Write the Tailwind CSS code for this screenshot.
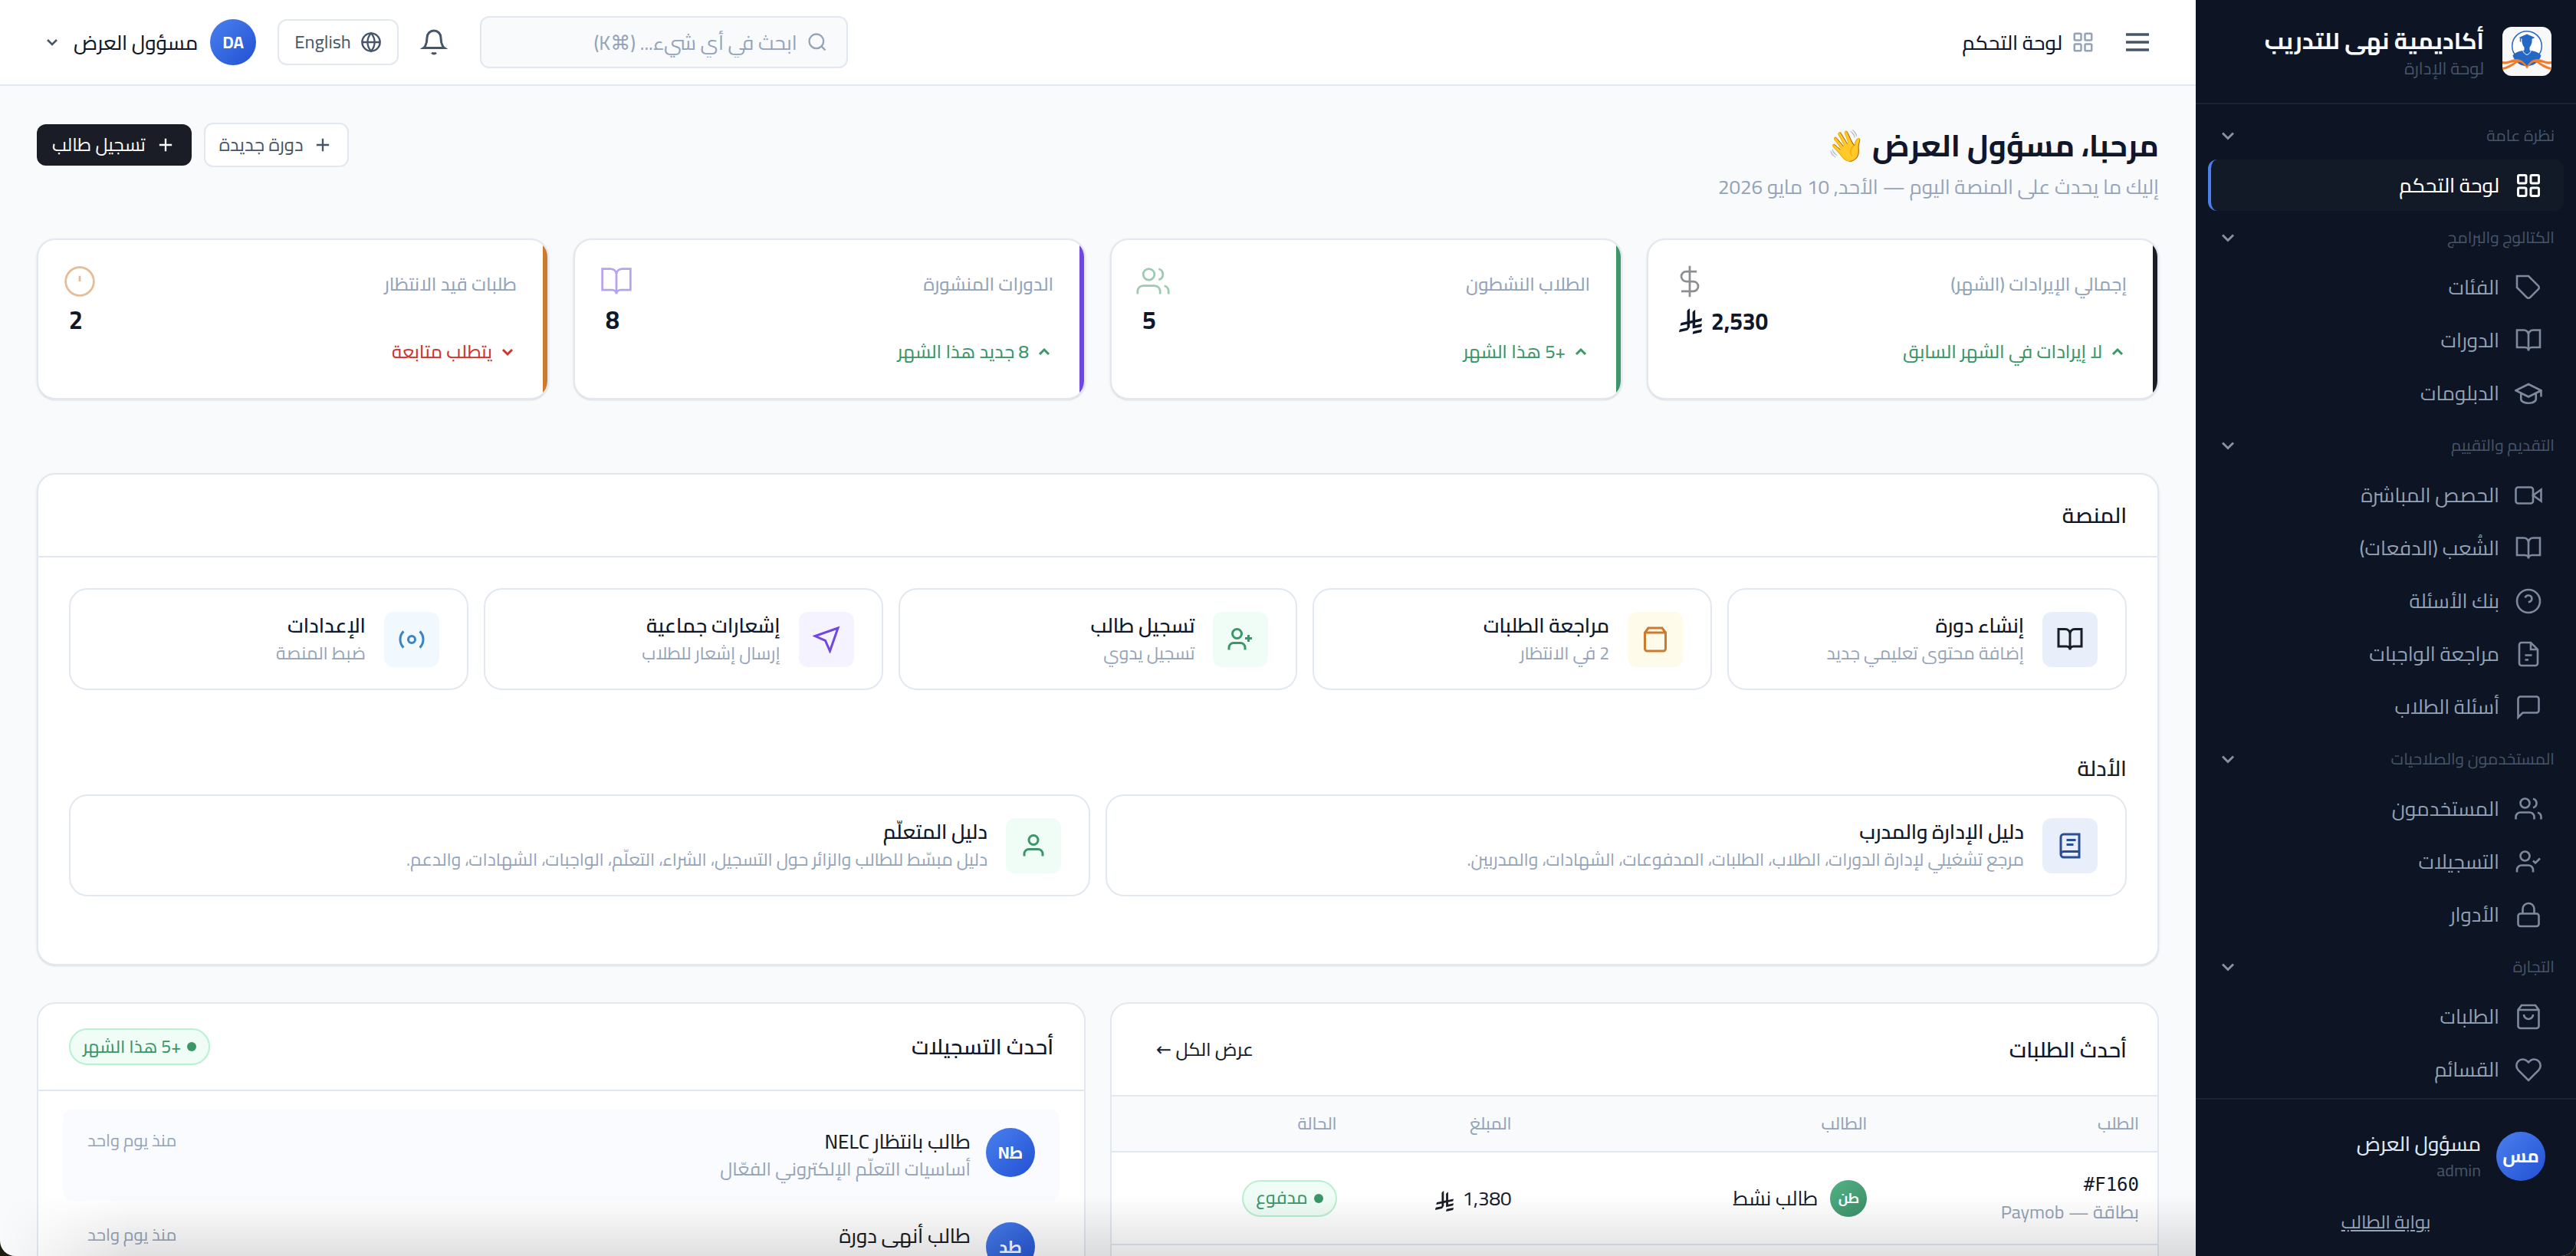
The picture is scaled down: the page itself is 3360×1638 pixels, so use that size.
<!DOCTYPE html>
<html lang="ar" dir="rtl">

<head>
    <meta charset="UTF-8">
    <meta name="viewport" content="width=device-width, initial-scale=1.0">
    <title>لوحة التحكم</title>
    <script src="https://cdn.jsdelivr.net/npm/@tailwindcss/browser@4"></script>
</head>

<body class="bg-[#1c1d10] font-['Cairo','Noto_Sans','DejaVu_Sans',sans-serif] text-[#0f172a]">
    <!-- Icons -->
    <svg class="hidden">
        <symbol id="i-grid" viewBox="0 0 24 24"><rect x="3" y="3" width="7" height="7" rx="1" /><rect x="14" y="3" width="7" height="7" rx="1" /><rect x="3" y="14" width="7" height="7" rx="1" /><rect x="14" y="14" width="7" height="7" rx="1" /></symbol>
        <symbol id="i-down" viewBox="0 0 24 24"><path d="m6 9 6 6 6-6" /></symbol>
        <symbol id="i-up" viewBox="0 0 24 24"><path d="m6 15 6-6 6 6" /></symbol>
        <symbol id="i-tag" viewBox="0 0 24 24"><path d="M20.59 13.41l-7.17 7.17a2 2 0 0 1-2.83 0L2 12V2h10l8.59 8.59a2 2 0 0 1 0 2.82z" /></symbol>
        <symbol id="i-book" viewBox="0 0 24 24"><path d="M2 3h6a4 4 0 0 1 4 4v14a3 3 0 0 0-3-3H2zM22 3h-6a4 4 0 0 0-4 4v14a3 3 0 0 1 3-3h7z" /></symbol>
        <symbol id="i-cap" viewBox="0 0 24 24"><path d="M12 4 1 9.500l11 5.500 11-5.500zM5.500 12v5c0 2 3 3.500 6.500 3.500s6.500-1.500 6.500-3.500v-5M23 9.500V15" /></symbol>
        <symbol id="i-video" viewBox="0 0 24 24"><path d="m23 7-7 5 7 5z" /><rect x="1" y="5" width="15" height="14" rx="2" /></symbol>
        <symbol id="i-help" viewBox="0 0 24 24"><circle cx="12" cy="12" r="10" /><path d="M9.090 9a3 3 0 0 1 5.830 1c0 2-3 3-3 3" /></symbol>
        <symbol id="i-file" viewBox="0 0 24 24"><path d="M14 2H6a2 2 0 0 0-2 2v16a2 2 0 0 0 2 2h12a2 2 0 0 0 2-2V8zM14 2v6h6M15 13H9M12 17H9" /></symbol>
        <symbol id="i-chat" viewBox="0 0 24 24"><path d="M21 15a2 2 0 0 1-2 2H7l-4 4V5a2 2 0 0 1 2-2h14a2 2 0 0 1 2 2z" /></symbol>
        <symbol id="i-users" viewBox="0 0 24 24"><path d="M17 21v-2a4 4 0 0 0-4-4H5a4 4 0 0 0-4 4v2" /><circle cx="9" cy="7" r="4" /><path d="M23 21v-2a4 4 0 0 0-3-3.870M16 3.130a4 4 0 0 1 0 7.750" /></symbol>
        <symbol id="i-user-check" viewBox="0 0 24 24"><path d="M16 21v-2a4 4 0 0 0-4-4H6a4 4 0 0 0-4 4v2" /><circle cx="9" cy="7" r="4" /><path d="m16 11 2 2 4-4" /></symbol>
        <symbol id="i-user-plus" viewBox="0 0 24 24"><path d="M16 21v-2a4 4 0 0 0-4-4H6a4 4 0 0 0-4 4v2" /><circle cx="9" cy="7" r="4" /><path d="M19 8v6M22 11h-6" /></symbol>
        <symbol id="i-user" viewBox="0 0 24 24"><path d="M20 21v-2a4 4 0 0 0-4-4H8a4 4 0 0 0-4 4v2" /><circle cx="12" cy="7" r="4" /></symbol>
        <symbol id="i-lock" viewBox="0 0 24 24"><rect x="3" y="11" width="18" height="11" rx="2" /><path d="M7 11V7a5 5 0 0 1 10 0v4" /></symbol>
        <symbol id="i-bag" viewBox="0 0 24 24"><path d="M6 2 3 6v14a2 2 0 0 0 2 2h14a2 2 0 0 0 2-2V6l-3-4zM3 6h18" /></symbol>
        <symbol id="i-heart" viewBox="0 0 24 24"><path d="M20.840 4.610a5.500 5.500 0 0 0-7.780 0L12 5.670l-1.060-1.060a5.500 5.500 0 0 0-7.780 7.780L12 21.230l8.840-8.840a5.500 5.500 0 0 0 0-7.780z" /></symbol>
        <symbol id="i-menu" viewBox="0 0 24 24"><path d="M3 6h18M3 12h18M3 18h18" /></symbol>
        <symbol id="i-search" viewBox="0 0 24 24"><circle cx="11" cy="11" r="8" /><path d="m21 21-4.350-4.350" /></symbol>
        <symbol id="i-bell" viewBox="0 0 24 24"><path d="M18 8A6 6 0 0 0 6 8c0 7-3 9-3 9h18s-3-2-3-9M13.730 21a2 2 0 0 1-3.460 0" /></symbol>
        <symbol id="i-globe" viewBox="0 0 24 24"><circle cx="12" cy="12" r="10" /><path d="M2 12h20M12 2a15.300 15.300 0 0 1 4 10 15.300 15.300 0 0 1-4 10 15.300 15.300 0 0 1-4-10A15.300 15.300 0 0 1 12 2z" /></symbol>
        <symbol id="i-plus" viewBox="0 0 24 24"><path d="M12 5v14M5 12h14" /></symbol>
        <symbol id="i-dollar" viewBox="0 0 24 24"><path d="M12 1v22M17 5H9.500a3.500 3.500 0 0 0 0 7h5a3.500 3.500 0 0 1 0 7H6" /></symbol>
        <symbol id="i-alert" viewBox="0 0 24 24"><circle cx="12" cy="12" r="10" /><path d="M12 8v4" /></symbol>
        <symbol id="i-send" viewBox="0 0 24 24"><path d="M22 2 15 22l-4-9-9-4z" /></symbol>
        <symbol id="i-signal" viewBox="0 0 24 24"><circle cx="12" cy="12" r="3" /><path d="M19.070 4.930a10 10 0 0 1 0 14.140M4.930 19.070a10 10 0 0 1 0-14.140" /></symbol>
        <symbol id="i-guide" viewBox="0 0 24 24"><path d="M4 19.500A2.500 2.500 0 0 1 6.500 17H20M6.500 2H20v20H6.500A2.500 2.500 0 0 1 4 19.500v-15A2.500 2.500 0 0 1 6.500 2zM9 7h8M9 11h6" /></symbol>
        <symbol id="i-riyal" viewBox="0 0 1124 1256"><path d="M699.620 1113.020c-20.060 44.480-33.320 92.750-38.400 143.370l424.510-90.240c20.060-44.470 33.310-92.750 38.400-143.370zM1085.730 895.800c20.060-44.470 33.320-92.750 38.400-143.370l-330.680 70.330v-135.200l292.270-62.110c20.060-44.470 33.320-92.750 38.400-143.370l-330.680 70.270V66.130c-50.670 28.450-95.670 66.320-132.250 110.990v403.350l-132.250 28.110V0c-50.670 28.440-95.670 66.320-132.250 110.990v525.690l-295.910 62.880c-20.060 44.470-33.330 92.750-38.420 143.370l334.330-71.050v170.260l-358.300 76.140c-20.060 44.470-33.320 92.750-38.400 143.370l375.040-79.700c30.530-6.350 56.770-24.400 73.830-49.240l68.780-101.990c7.140-10.550 11.300-23.270 11.300-36.970v-149.980l132.250-28.110v270.400z" /></symbol>
    </svg>

    <div class="flex h-screen overflow-hidden rounded-b-[20px] bg-[#f8fafc]">

        <!-- Sidebar -->
        <aside class="flex w-[496px] shrink-0 flex-col bg-[#0d1424]">
            <div class="flex h-[136px] shrink-0 items-center gap-6 border-b-2 border-[#1c2433] px-8">
                <svg class="size-16 shrink-0 rounded-xl bg-[#f8f8f8]" viewBox="0 0 64 64">
                    <circle cx="32" cy="25" r="19.300" fill="#fff" stroke="#2468c4" stroke-width="1.500" />
                    <path d="M32 9.500 21.500 14l4 1.800c-.5 4 .5 8 3 11v3.700l-6.500 1.500c-4 1-7 3-8.500 5.500A19.300 19.300 0 0 0 50.500 37.500c-1.500-2.500-4.500-4.500-8.500-5.500l-6.500-1.500v-3.700c2.500-3 3.500-7 3-11l4-1.800z" fill="#2468c4" />
                    <path d="M23.500 15v4.500" fill="none" stroke="#2468c4" stroke-width="1.500" />
                    <path d="M26.500 30.500c1 3.500 3 5 5.500 6 2.500-1 4.500-2.500 5.500-6" fill="none" stroke="#fff" stroke-width="1" />
                    <path d="M0 45c7 1.500 10-2 17-3 8-.8 12 5 15 9 3-4 7-9.800 15-9 7 1 10 4.500 17 3v3c-7 1.500-10-1.500-16-2 6 3 10 6 16 7v3c-8-1-13-5-19-9-5-3-9 2-13 7.500-4-5.500-8-10.500-13-7.500-6 4-11 8-19 9v-3c6-1 10-4 16-7-6 .5-9 3.500-16 2z" fill="#f07c2b" />
                </svg>
                <div class="min-w-0 pt-1">
                    <div class="text-[30px] leading-10 font-bold text-[#f8fafc]">أكاديمية نهى للتدريب</div>
                    <div class="text-[22px] leading-8 text-[#475569]">لوحة الإدارة</div>
                </div>
            </div>

            <nav class="flex min-h-0 flex-1 flex-col gap-0.5 overflow-hidden px-4 pt-3 text-[26px] text-[#94a3b8]">
                <button class="flex h-[58px] shrink-0 items-center justify-between px-3 text-[21px] text-[#475569]">نظرة عامة<svg class="size-7 fill-none stroke-[#8b929e] stroke-[2.5]"><use href="#i-down" /></svg></button>
                <a href="#" class="flex h-[67px] shrink-0 items-center gap-5 rounded-xl border-e-4 border-[#4a80ee] bg-[#121927] px-7 font-medium text-white"><svg class="size-9 fill-none stroke-current stroke-2"><use href="#i-grid" /></svg>لوحة التحكم</a>

                <button class="mt-1 flex h-[58px] shrink-0 items-center justify-between px-3 text-[21px] text-[#475569]">الكتالوج والبرامج<svg class="size-7 fill-none stroke-[#8b929e] stroke-[2.5]"><use href="#i-down" /></svg></button>
                <a href="#" class="flex h-[67px] shrink-0 items-center gap-5 px-7"><svg class="size-9 fill-none stroke-[#7e899d] stroke-[1.75]"><use href="#i-tag" /></svg>الفئات</a>
                <a href="#" class="flex h-[67px] shrink-0 items-center gap-5 px-7"><svg class="size-9 fill-none stroke-[#7e899d] stroke-[1.75]"><use href="#i-book" /></svg>الدورات</a>
                <a href="#" class="flex h-[67px] shrink-0 items-center gap-5 px-7"><svg class="size-9 fill-none stroke-[#7e899d] stroke-[1.75]"><use href="#i-cap" /></svg>الدبلومات</a>

                <button class="mt-1 flex h-[58px] shrink-0 items-center justify-between px-3 text-[21px] text-[#475569]">التقديم والتقييم<svg class="size-7 fill-none stroke-[#8b929e] stroke-[2.5]"><use href="#i-down" /></svg></button>
                <a href="#" class="flex h-[67px] shrink-0 items-center gap-5 px-7"><svg class="size-9 fill-none stroke-[#7e899d] stroke-[1.75]"><use href="#i-video" /></svg>الحصص المباشرة</a>
                <a href="#" class="flex h-[67px] shrink-0 items-center gap-5 px-7"><svg class="size-9 fill-none stroke-[#7e899d] stroke-[1.75]"><use href="#i-book" /></svg>الشُعب (الدفعات)</a>
                <a href="#" class="flex h-[67px] shrink-0 items-center gap-5 px-7"><svg class="size-9 fill-none stroke-[#7e899d] stroke-[1.75]"><use href="#i-help" /></svg>بنك الأسئلة</a>
                <a href="#" class="flex h-[67px] shrink-0 items-center gap-5 px-7"><svg class="size-9 fill-none stroke-[#7e899d] stroke-[1.75]"><use href="#i-file" /></svg>مراجعة الواجبات</a>
                <a href="#" class="flex h-[67px] shrink-0 items-center gap-5 px-7"><svg class="size-9 fill-none stroke-[#7e899d] stroke-[1.75]"><use href="#i-chat" /></svg>أسئلة الطلاب</a>

                <button class="mt-1 flex h-[58px] shrink-0 items-center justify-between px-3 text-[21px] text-[#475569]">المستخدمون والصلاحيات<svg class="size-7 fill-none stroke-[#8b929e] stroke-[2.5]"><use href="#i-down" /></svg></button>
                <a href="#" class="flex h-[67px] shrink-0 items-center gap-5 px-7"><svg class="size-9 fill-none stroke-[#7e899d] stroke-[1.75]"><use href="#i-users" /></svg>المستخدمون</a>
                <a href="#" class="flex h-[67px] shrink-0 items-center gap-5 px-7"><svg class="size-9 fill-none stroke-[#7e899d] stroke-[1.75]"><use href="#i-user-check" /></svg>التسجيلات</a>
                <a href="#" class="flex h-[67px] shrink-0 items-center gap-5 px-7"><svg class="size-9 fill-none stroke-[#7e899d] stroke-[1.75]"><use href="#i-lock" /></svg>الأدوار</a>

                <button class="mt-1 flex h-[58px] shrink-0 items-center justify-between px-3 text-[21px] text-[#475569]">التجارة<svg class="size-7 fill-none stroke-[#8b929e] stroke-[2.5]"><use href="#i-down" /></svg></button>
                <a href="#" class="flex h-[67px] shrink-0 items-center gap-5 px-7"><svg class="size-9 fill-none stroke-[#7e899d] stroke-[1.75]" viewBox="0 0 24 24"><use href="#i-bag" /><path d="M16 10a4 4 0 0 1-8 0" /></svg>الطلبات</a>
                <a href="#" class="flex h-[67px] shrink-0 items-center gap-5 px-7"><svg class="size-9 fill-none stroke-[#7e899d] stroke-[1.75]"><use href="#i-heart" /></svg>القسائم</a>
            </nav>

            <div class="shrink-0 border-t-2 border-[#1c2433] px-10 pt-10 pb-6">
                <div class="flex items-center gap-5">
                    <div class="flex size-16 shrink-0 items-center justify-center rounded-full bg-linear-to-br from-[#4a80ee] to-[#2450d3] text-[24px] font-bold text-white">مس</div>
                    <div>
                        <div class="text-[26px] leading-9 font-medium text-[#e2e8f0]">مسؤول العرض</div>
                        <div class="text-[22px] leading-8 text-[#475569]">admin</div>
                    </div>
                </div>
                <a href="#" class="mt-8 block text-center text-[24px] leading-10 text-[#94a3b8] underline">بوابة الطالب</a>
            </div>
        </aside>

        <div class="relative flex min-w-0 flex-1 flex-col">
            <!-- Top bar -->
            <header class="flex h-28 shrink-0 items-center justify-between border-b-2 border-[#e2e8f0] bg-white px-12">
                <div class="flex items-center gap-7">
                    <button class="p-2" aria-label="القائمة"><svg class="size-10 fill-none stroke-[#475569] stroke-2"><use href="#i-menu" /></svg></button>
                    <div class="flex items-center gap-3 text-[26px] font-medium"><svg class="size-[30px] fill-none stroke-[#94a3b8] stroke-2"><use href="#i-grid" /></svg>لوحة التحكم</div>
                </div>
                <div class="flex items-center gap-4">
                    <label class="me-3.5 flex h-[68px] w-[480px] items-center gap-3 rounded-xl border-2 border-[#e2e8f0] bg-[#f8fafc] px-6">
                        <svg class="size-7 shrink-0 fill-none stroke-[#94a3b8] stroke-2"><use href="#i-search" /></svg>
                        <input type="search" aria-label="بحث" placeholder="ابحث في أي شيء... (⌘K)" class="min-w-0 flex-1 bg-transparent text-[26px] outline-none placeholder:text-[#94a3b8]">
                    </label>
                    <button class="p-3" aria-label="الإشعارات"><svg class="size-9 fill-none stroke-[#475569] stroke-2"><use href="#i-bell" /></svg></button>
                    <button class="flex h-[60px] items-center gap-3 rounded-xl border-2 border-[#e2e8f0] px-5 text-[24px] text-[#475569]"><svg class="size-7 fill-none stroke-current stroke-2"><use href="#i-globe" /></svg>English</button>
                    <button class="flex items-center gap-4 ps-3 pe-2">
                        <span class="flex size-[60px] items-center justify-center rounded-full bg-linear-to-br from-[#4a80ee] to-[#2450d3] text-[22px] font-bold text-white">DA</span>
                        <span class="text-[26px] font-medium">مسؤول العرض</span>
                        <svg class="size-6 fill-none stroke-[#475569] stroke-[2.5]"><use href="#i-down" /></svg>
                    </button>
                </div>
            </header>

            <main class="flex min-h-0 flex-1 flex-col overflow-hidden px-12 pt-12">
                <div class="mb-[43px] flex shrink-0 items-start justify-between">
                    <div>
                        <h1 class="text-[40px] leading-[60px] font-bold">مرحبا، مسؤول العرض 👋</h1>
                        <p class="text-[26px] leading-[48px] text-[#94a3b8]">إليك ما يحدث على المنصة اليوم — الأحد, 10 مايو 2026</p>
                    </div>
                    <div class="flex items-center gap-4 text-[24px]">
                        <button class="flex h-[58px] items-center gap-3 rounded-xl border-2 border-[#e2e8f0] bg-white px-[18px] text-[#475569]"><svg class="size-7 fill-none stroke-current stroke-2"><use href="#i-plus" /></svg>دورة جديدة</button>
                        <button class="flex h-[54px] items-center gap-3 rounded-xl bg-[#1a1d26] px-5 text-white"><svg class="size-7 fill-none stroke-current stroke-2"><use href="#i-plus" /></svg>تسجيل طالب</button>
                    </div>
                </div>

                <!-- Stats -->
                <section class="mb-24 grid shrink-0 grid-cols-4 gap-8">
                    <div class="flex h-[210px] justify-between overflow-hidden rounded-3xl border-2 border-[#e2e8f0] bg-white shadow-sm">
                        <div class="w-1.5 bg-[#1a1d26]"></div>
                        <div class="flex-1 ps-[34px] pt-9 text-[24px] font-medium">
                            <div class="leading-[44px] text-[#94a3b8]">إجمالي الإيرادات (الشهر)</div>
                            <div class="mt-11 flex items-center gap-2 leading-[44px] text-[#3c9668]"><svg class="size-6 fill-none stroke-current stroke-3"><use href="#i-up" /></svg>لا إيرادات في الشهر السابق</div>
                        </div>
                        <div class="flex flex-col items-end pe-8 pt-8 text-[30px] font-bold">
                            <svg class="size-11 fill-none stroke-[#8c8e92] stroke-[1.5]"><use href="#i-dollar" /></svg>
                            <div class="flex items-center gap-3 pe-2 leading-[60px]">2,530<svg class="h-[34px] w-[30px] fill-current"><use href="#i-riyal" /></svg></div>
                        </div>
                    </div>
                    <div class="flex h-[210px] justify-between overflow-hidden rounded-3xl border-2 border-[#e2e8f0] bg-white shadow-sm">
                        <div class="w-1.5 bg-[#3c9668]"></div>
                        <div class="flex-1 ps-[34px] pt-9 text-[24px] font-medium">
                            <div class="leading-[44px] text-[#94a3b8]">الطلاب النشطون</div>
                            <div class="mt-11 flex items-center gap-2 leading-[44px] text-[#3c9668]"><svg class="size-6 fill-none stroke-current stroke-3"><use href="#i-up" /></svg>+5 هذا الشهر</div>
                        </div>
                        <div class="flex flex-col items-end pe-8 pt-8 text-[32px] font-bold">
                            <svg class="size-11 fill-none stroke-[#9dcab3] stroke-[1.5]"><use href="#i-users" /></svg>
                            <div class="pe-2 leading-[56px]">5</div>
                        </div>
                    </div>
                    <div class="flex h-[210px] justify-between overflow-hidden rounded-3xl border-2 border-[#e2e8f0] bg-white shadow-sm">
                        <div class="w-1.5 bg-[#7047e2]"></div>
                        <div class="flex-1 ps-[34px] pt-9 text-[24px] font-medium">
                            <div class="leading-[44px] text-[#94a3b8]">الدورات المنشورة</div>
                            <div class="mt-11 flex items-center gap-2 leading-[44px] text-[#3c9668]"><svg class="size-6 fill-none stroke-current stroke-3"><use href="#i-up" /></svg>8 جديد هذا الشهر</div>
                        </div>
                        <div class="flex flex-col items-end pe-8 pt-8 text-[32px] font-bold">
                            <svg class="size-11 fill-none stroke-[#b7a3f0] stroke-[1.5]"><use href="#i-book" /></svg>
                            <div class="pe-2 leading-[56px]">8</div>
                        </div>
                    </div>
                    <div class="flex h-[210px] justify-between overflow-hidden rounded-3xl border-2 border-[#e2e8f0] bg-white shadow-sm">
                        <div class="w-1.5 bg-[#cc7a2e]"></div>
                        <div class="flex-1 ps-[34px] pt-9 text-[24px] font-medium">
                            <div class="leading-[44px] text-[#94a3b8]">طلبات قيد الانتظار</div>
                            <div class="mt-11 flex items-center gap-2 leading-[44px] text-[#cf352e]"><svg class="size-6 fill-none stroke-current stroke-3"><use href="#i-down" /></svg>يتطلب متابعة</div>
                        </div>
                        <div class="flex flex-col items-end pe-8 pt-8 text-[32px] font-bold">
                            <svg class="size-11 fill-none stroke-[#e5bc96] stroke-[1.5]"><use href="#i-alert" /></svg>
                            <div class="pe-2 leading-[56px]">2</div>
                        </div>
                    </div>
                </section>

                <!-- Platform -->
                <section class="mb-12 shrink-0 rounded-3xl border-2 border-[#e2e8f0] bg-white pb-[88px] shadow-sm">
                    <h2 class="border-b-2 border-[#e2e8f0] px-10 py-8 text-[28px] leading-[42px] font-semibold">المنصة</h2>
                    <div class="grid grid-cols-5 gap-5 px-10 pt-10">
                        <a href="#" class="flex h-[133px] items-center gap-6 rounded-3xl border-2 border-[#e2e8f0] px-9">
                            <span class="flex size-[72px] shrink-0 items-center justify-center rounded-xl bg-[#e9effa]"><svg class="size-9 fill-none stroke-[#1a1d26] stroke-2"><use href="#i-book" /></svg></span>
                            <span><span class="block text-[26px] leading-9 font-semibold">إنشاء دورة</span><span class="block text-[23px] leading-9 text-[#94a3b8]">إضافة محتوى تعليمي جديد</span></span>
                        </a>
                        <a href="#" class="flex h-[133px] items-center gap-6 rounded-3xl border-2 border-[#e2e8f0] px-9">
                            <span class="flex size-[72px] shrink-0 items-center justify-center rounded-xl bg-[#fffbea]"><svg class="size-9 fill-none stroke-[#cc7a2e] stroke-2"><use href="#i-bag" /></svg></span>
                            <span><span class="block text-[26px] leading-9 font-semibold">مراجعة الطلبات</span><span class="block text-[23px] leading-9 text-[#94a3b8]">2 في الانتظار</span></span>
                        </a>
                        <a href="#" class="flex h-[133px] items-center gap-6 rounded-3xl border-2 border-[#e2e8f0] px-9">
                            <span class="flex size-[72px] shrink-0 items-center justify-center rounded-xl bg-[#f0fdf6]"><svg class="size-9 fill-none stroke-[#3c9668] stroke-2"><use href="#i-user-plus" /></svg></span>
                            <span><span class="block text-[26px] leading-9 font-semibold">تسجيل طالب</span><span class="block text-[23px] leading-9 text-[#94a3b8]">تسجيل يدوي</span></span>
                        </a>
                        <a href="#" class="flex h-[133px] items-center gap-6 rounded-3xl border-2 border-[#e2e8f0] px-9">
                            <span class="flex size-[72px] shrink-0 items-center justify-center rounded-xl bg-[#f5f3ff]"><svg class="size-9 fill-none stroke-[#7047e2] stroke-2"><use href="#i-send" /></svg></span>
                            <span><span class="block text-[26px] leading-9 font-semibold">إشعارات جماعية</span><span class="block text-[23px] leading-9 text-[#94a3b8]">إرسال إشعار للطلاب</span></span>
                        </a>
                        <a href="#" class="flex h-[133px] items-center gap-6 rounded-3xl border-2 border-[#e2e8f0] px-9">
                            <span class="flex size-[72px] shrink-0 items-center justify-center rounded-xl bg-[#f1f9ff]"><svg class="size-9 fill-none stroke-[#3a83c5] stroke-2"><use href="#i-signal" /></svg></span>
                            <span><span class="block text-[26px] leading-9 font-semibold">الإعدادات</span><span class="block text-[23px] leading-9 text-[#94a3b8]">ضبط المنصة</span></span>
                        </a>
                    </div>

                    <h3 class="px-10 pt-20 text-[28px] leading-[44px] font-semibold text-[#1a1d26]">الأدلة</h3>
                    <div class="grid grid-cols-2 gap-5 px-10 pt-3">
                        <a href="#" class="flex h-[133px] items-center gap-6 rounded-3xl border-2 border-[#e2e8f0] px-9">
                            <span class="flex size-[72px] shrink-0 items-center justify-center rounded-xl bg-[#e9effa]"><svg class="size-9 fill-none stroke-[#284f93] stroke-2"><use href="#i-guide" /></svg></span>
                            <span><span class="block text-[26px] leading-9 font-semibold">دليل الإدارة والمدرب</span><span class="block text-[23px] leading-9 text-[#94a3b8]">مرجع تشغيلي لإدارة الدورات، الطلاب، الطلبات، المدفوعات، الشهادات، والمدربين.</span></span>
                        </a>
                        <a href="#" class="flex h-[133px] items-center gap-6 rounded-3xl border-2 border-[#e2e8f0] px-9">
                            <span class="flex size-[72px] shrink-0 items-center justify-center rounded-xl bg-[#f0fdf6]"><svg class="size-9 fill-none stroke-[#3c9668] stroke-2"><use href="#i-user" /></svg></span>
                            <span><span class="block text-[26px] leading-9 font-semibold">دليل المتعلّم</span><span class="block text-[23px] leading-9 text-[#94a3b8]">دليل مبسّط للطالب والزائر حول التسجيل، الشراء، التعلّم، الواجبات، الشهادات، والدعم.</span></span>
                        </a>
                    </div>
                </section>

                <!-- Latest orders and enrolments -->
                <div class="grid shrink-0 grid-cols-2 items-start gap-8">
                    <section class="overflow-hidden rounded-t-3xl border-2 border-[#e2e8f0] bg-white">
                        <div class="flex h-[121px] items-center justify-between border-b-2 border-[#e2e8f0] px-10">
                            <h2 class="text-[28px] font-semibold">أحدث الطلبات</h2>
                            <a href="#" class="px-[18px] text-[24px] font-medium text-[#1a1d26]">عرض الكل ←</a>
                        </div>
                        <table class="w-full table-fixed text-start">
                            <thead class="bg-[#f8fafc] text-[22px] text-[#94a3b8]">
                                <tr class="h-[72px] border-b-2 border-[#e2e8f0]">
                                    <th class="w-[26%] px-6 text-start font-medium">الطلب</th>
                                    <th class="w-[34%] px-6 text-start font-medium">الطالب</th>
                                    <th class="w-[228px] px-6 text-start font-medium">المبلغ</th>
                                    <th class="px-6 text-start font-medium">الحالة</th>
                                </tr>
                            </thead>
                            <tbody>
                                <tr class="h-[121px] border-b-2 border-[#e2e8f0]">
                                    <td class="px-6">
                                        <div class="text-right font-['DejaVu_Sans_Mono',monospace] text-[24px] leading-9" dir="ltr">#F160</div>
                                        <div class="text-[24px] leading-9 text-[#94a3b8]">بطاقة — Paymob</div>
                                    </td>
                                    <td class="px-6">
                                        <div class="flex items-center gap-4 text-[26px]"><span class="flex size-12 items-center justify-center rounded-full bg-linear-to-br from-[#52b285] to-[#3c8f66] text-[18px] font-bold text-white">طن</span>طالب نشط</div>
                                    </td>
                                    <td class="px-6">
                                        <div class="flex items-center gap-3 text-[26px] text-[#1a1d26]">1,380<svg class="mt-2 h-[27px] w-6 fill-current"><use href="#i-riyal" /></svg></div>
                                    </td>
                                    <td class="px-6">
                                        <span class="inline-flex h-12 items-center gap-2 rounded-full border-2 border-[#b9f0d0] bg-[#f0fdf6] px-4 text-[23px] font-medium text-[#3c9668]"><span class="size-3 rounded-full bg-current"></span>مدفوع</span>
                                    </td>
                                </tr>
                                <tr class="h-[121px]"><td></td><td></td><td></td><td></td></tr>
                            </tbody>
                        </table>
                    </section>

                    <section class="overflow-hidden rounded-t-3xl border-2 border-[#e2e8f0] bg-white">
                        <div class="flex h-[114px] items-center justify-between border-b-2 border-[#e2e8f0] px-10">
                            <h2 class="text-[28px] font-semibold">أحدث التسجيلات</h2>
                            <span class="inline-flex h-12 items-center gap-2 rounded-full border-2 border-[#b9f0d0] bg-[#f0fdf6] px-4 text-[23px] font-medium text-[#3c9668]"><span class="size-3 rounded-full bg-current"></span>+5 هذا الشهر</span>
                        </div>
                        <div class="flex flex-col gap-1 px-8 pt-6">
                            <div class="flex gap-5 rounded-xl bg-[#fafbff] px-8 pt-6 pb-[23px]">
                                <span class="flex size-16 shrink-0 items-center justify-center rounded-full bg-linear-to-br from-[#4a80ee] to-[#2450d3] text-[22px] font-bold text-white">طN</span>
                                <div class="flex-1">
                                    <div class="text-[26px] leading-9 font-medium text-[#1a1d26]">طالب بانتظار NELC</div>
                                    <div class="text-[24px] leading-9 text-[#94a3b8]">أساسيات التعلّم الإلكتروني الفعّال</div>
                                </div>
                                <div class="text-[22px] leading-8 text-[#94a3b8]">منذ يوم واحد</div>
                            </div>
                            <div class="flex gap-5 rounded-xl px-8 pt-6">
                                <span class="flex size-16 shrink-0 items-center justify-center rounded-full bg-linear-to-br from-[#4a80ee] to-[#2450d3] text-[22px] font-bold text-white">طد</span>
                                <div class="flex-1">
                                    <div class="text-[26px] leading-9 font-medium text-[#1a1d26]">طالب أنهى دورة</div>
                                </div>
                                <div class="text-[22px] leading-8 text-[#94a3b8]">منذ يوم واحد</div>
                            </div>
                        </div>
                    </section>
                </div>
            </main>

            <!-- Fade over the cut-off rows -->
            <div class="pointer-events-none absolute inset-x-0 bottom-0 h-20 mask-l-from-94% bg-linear-to-b from-transparent to-black/12"></div>
        </div>
    </div>
</body>

</html>
